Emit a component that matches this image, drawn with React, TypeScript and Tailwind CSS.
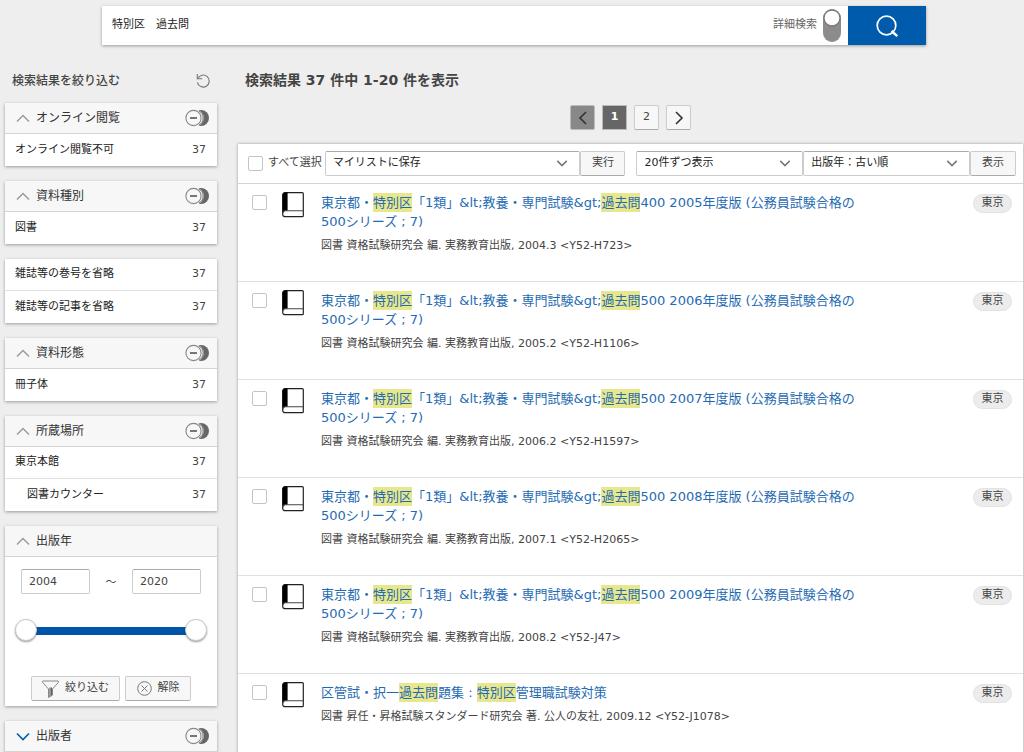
import { Fragment, ReactNode, useState } from "react";

type Facet = { label: string; count: number; nested?: boolean };
type FacetGroup = { title?: string; items: Facet[] };
type Book = { title: string; meta: string };

const KEYWORDS = /(特別区|過去問)/;

const FACET_GROUPS: FacetGroup[] = [
  { title: "オンライン閲覧", items: [{ label: "オンライン閲覧不可", count: 37 }] },
  { title: "資料種別", items: [{ label: "図書", count: 37 }] },
  {
    items: [
      { label: "雑誌等の巻号を省略", count: 37 },
      { label: "雑誌等の記事を省略", count: 37 },
    ],
  },
  { title: "資料形態", items: [{ label: "冊子体", count: 37 }] },
  {
    title: "所蔵場所",
    items: [
      { label: "東京本館", count: 37 },
      { label: "図書カウンター", count: 37, nested: true },
    ],
  },
];

const seriesTitle = (no: number, year: number) =>
  `東京都・特別区「1類」&lt;教養・専門試験&gt;過去問${no} ${year}年度版 (公務員試験合格の500シリーズ ; 7)`;

const BOOKS: Book[] = [
  { title: seriesTitle(400, 2005), meta: "図書 資格試験研究会 編. 実務教育出版, 2004.3 <Y52-H723>" },
  { title: seriesTitle(500, 2006), meta: "図書 資格試験研究会 編. 実務教育出版, 2005.2 <Y52-H1106>" },
  { title: seriesTitle(500, 2007), meta: "図書 資格試験研究会 編. 実務教育出版, 2006.2 <Y52-H1597>" },
  { title: seriesTitle(500, 2008), meta: "図書 資格試験研究会 編. 実務教育出版, 2007.1 <Y52-H2065>" },
  { title: seriesTitle(500, 2009), meta: "図書 資格試験研究会 編. 実務教育出版, 2008.2 <Y52-J47>" },
  {
    title: "区管試・択一過去問題集 : 特別区管理職試験対策",
    meta: "図書 昇任・昇格試験スタンダード研究会 著. 公人の友社, 2009.12 <Y52-J1078>",
  },
];

const CHECKBOX =
  "size-[15px] shrink-0 appearance-none rounded-xs border border-[#c4c4c4] bg-white checked:border-[#005bac] checked:bg-[#005bac]";
const SMALL_BUTTON =
  "flex h-[25px] cursor-pointer items-center justify-center rounded-xs border border-[#ccc] border-b-[#aaa] bg-[#f7f7f7]";
const THUMB =
  "[&::-webkit-slider-thumb]:pointer-events-auto [&::-webkit-slider-thumb]:size-[22px] [&::-webkit-slider-thumb]:appearance-none [&::-webkit-slider-thumb]:rounded-full [&::-webkit-slider-thumb]:border [&::-webkit-slider-thumb]:border-[#ccc] [&::-webkit-slider-thumb]:bg-white [&::-webkit-slider-thumb]:shadow-[0_1px_2px_rgba(0,0,0,0.4)]";
const CARD = "bg-white shadow-[0_1px_3px_rgba(0,0,0,0.35)]";

const Chevron = ({ className, points }: { className: string; points: string }): ReactNode => (
  <svg viewBox="0 0 14 14" fill="none" stroke="currentColor" className={className}>
    <polyline points={points} />
  </svg>
);

const ExcludeIcon = (): ReactNode => (
  <svg width="24" height="18" viewBox="0 0 24 18" fill="none">
    <circle cx="16" cy="9" r="8" fill="#666" />
    <circle cx="10.200" cy="9" r="8.600" fill="#f7f7f7" />
    <path d="M14 2a8 8 0 0 1 0 14" stroke="#777" strokeWidth="1" />
    <circle cx="8.500" cy="9" r="7.600" fill="#f7f7f7" stroke="#888" strokeWidth="1.100" />
    <path d="M5 9h7" stroke="#555" strokeWidth="1.600" />
  </svg>
);

const BookIcon = (): ReactNode => (
  <svg width="22" height="26" viewBox="0 0 22 26" fill="none" className="shrink-0">
    <path d="M3 .7h17.300a1 1 0 0 1 1 1v22a1 1 0 0 1-1 1H3A2.300 2.300 0 0 1 .7 22.400V3A2.300 2.300 0 0 1 3 .7z" fill="#fff" stroke="#222" strokeWidth="1.200" />
    <path d="M3 .5h2.600v18.300H3.200L.5 21V3A2.500 2.500 0 0 1 3 .5z" fill="#000" />
    <path d="M.8 21.500c0-1.700.9-2.700 2.400-2.700h18" stroke="#444" strokeWidth="1.100" />
  </svg>
);

const SearchBar = (): ReactNode => (
  <form
    role="search"
    onSubmit={(e) => e.preventDefault()}
    className={`mt-1.5 mr-[98px] ml-[102px] flex h-[39px] items-stretch ${CARD}`}
  >
    <input
      type="text"
      aria-label="検索キーワード"
      defaultValue="特別区　過去問"
      className="min-w-0 grow px-2.5 text-[#222] outline-none"
    />
    <button type="button" className="flex cursor-pointer items-center gap-1.5 pr-[7px] text-[#666]">
      詳細検索
      <svg width="18" height="33" viewBox="0 0 18 33" fill="none">
        <rect width="18" height="33" rx="9" fill="#8c8c8c" />
        <circle cx="9" cy="9" r="8" fill="#fff" stroke="#777" strokeWidth="1.300" />
      </svg>
    </button>
    <button type="submit" aria-label="検索" className="flex w-[78px] cursor-pointer items-center justify-center bg-[#005bac]">
      <svg width="24" height="24" viewBox="0 0 24 24" fill="none" stroke="#fff">
        <circle cx="11.500" cy="11.500" r="9.300" strokeWidth="1.700" />
        <path d="M16.500 17l5.800 5.200" strokeWidth="2.400" />
      </svg>
    </button>
  </form>
);

const FacetHeader = ({ title, closed, exclude = true }: { title: string; closed?: boolean; exclude?: boolean }): ReactNode => (
  <div className="flex h-[31px] items-center justify-between border-b border-[#d4d4d4] bg-[#f7f7f7] pr-2 pl-[11px]">
    <button type="button" aria-expanded={!closed} className="flex cursor-pointer items-center gap-1.5 text-xs text-[#333]">
      {closed ? (
        <Chevron points="1,4.5 7,10.500 13,4.5" className="size-3.5 text-[#005bac] stroke-[1.6]" />
      ) : (
        <Chevron points="1,10.500 7,4.5 13,10.500" className="size-3.5 text-[#999] stroke-[1.4]" />
      )}
      {title}
    </button>
    {exclude && (
      <button type="button" aria-label={`${title}を除外`} className="cursor-pointer">
        <ExcludeIcon />
      </button>
    )}
  </div>
);

const YearFilter = (): ReactNode => {
  const [from, setFrom] = useState(2004);
  const [to, setTo] = useState(2020);
  const yearInput = "h-[25px] w-[69px] rounded-xs border border-[#ccc] border-t-[#aaa] bg-white px-[7px] text-[#444]";

  return (
    <section className={CARD}>
      <FacetHeader title="出版年" exclude={false} />
      <div className="flex items-center justify-between px-4 pt-3">
        <input
          aria-label="出版年（開始）"
          value={from}
          onChange={(e) => setFrom(Number(e.target.value))}
          className={yearInput}
        />
        <span className="pt-1">～</span>
        <input
          aria-label="出版年（終了）"
          value={to}
          onChange={(e) => setTo(Number(e.target.value))}
          className={yearInput}
        />
      </div>
      <div className="relative mx-2.5 mt-[25px] h-[22px]">
        <div className="absolute inset-x-3 top-2 h-2 bg-[#0055a9]" />
        <input
          type="range"
          aria-label="開始年"
          min={2004}
          max={2020}
          value={from}
          onChange={(e) => setFrom(Math.min(Number(e.target.value), to))}
          className={`pointer-events-none absolute inset-0 h-[22px] w-full appearance-none bg-transparent ${THUMB}`}
        />
        <input
          type="range"
          aria-label="終了年"
          min={2004}
          max={2020}
          value={to}
          onChange={(e) => setTo(Math.max(Number(e.target.value), from))}
          className={`pointer-events-none absolute inset-0 h-[22px] w-full appearance-none bg-transparent ${THUMB}`}
        />
      </div>
      <div className="flex justify-center gap-[5px] pt-[35px] pb-[5px]">
        <button type="button" className={`${SMALL_BUTTON} w-[89px] gap-1.5`}>
          <svg width="17" height="18" viewBox="0 0 17 18" fill="none" stroke="#888">
            <path d="M.7 1h15.600v1.500L10.500 9v6l-4 2.500V9L.7 2.500z" />
            <path d="M8 7.500v9M9.500 7.500v8" stroke="#666" strokeWidth="1.200" />
          </svg>
          絞り込む
        </button>
        <button type="button" className={`${SMALL_BUTTON} w-[66px] gap-1.5`}>
          <svg width="15" height="15" viewBox="0 0 15 15" fill="none" stroke="#777">
            <circle cx="7.500" cy="7.500" r="6.800" />
            <path d="M4.500 4.500l6 6M10.500 4.500l-6 6" />
          </svg>
          解除
        </button>
      </div>
    </section>
  );
};

const Sidebar = (): ReactNode => (
  <aside className="w-[212px] shrink-0">
    <div className="flex h-[33px] items-center justify-between px-[7px]">
      <h2 className="text-xs font-medium text-[#444]">検索結果を絞り込む</h2>
      <button type="button" aria-label="条件をリセット" className="cursor-pointer">
        <svg width="14" height="15" viewBox="0 0 14 15" fill="none" stroke="#777" strokeWidth="1.100">
          <path d="M1.800 5.500a6 6 0 1 1-.4 4" />
          <path d="M1.300 1v4.700h4.900" />
        </svg>
      </button>
    </div>
    <div className="mt-1.5 flex flex-col gap-[15px]">
      {FACET_GROUPS.map((group) => (
        <section key={group.items[0].label} className={CARD}>
          {group.title && <FacetHeader title={group.title} />}
          <ul className="divide-y divide-[#e2e2e2]">
            {group.items.map((item) => (
              <li key={item.label} className="h-8">
                <a
                  href="#"
                  className={`flex h-full items-center justify-between pr-[11px] ${item.nested ? "pl-[22px]" : "pl-2.5"}`}
                >
                  <span className="text-[#222]">{item.label}</span>
                  <span>{item.count}</span>
                </a>
              </li>
            ))}
          </ul>
        </section>
      ))}
      <YearFilter />
      <section className={CARD}>
        <FacetHeader title="出版者" closed />
      </section>
    </div>
  </aside>
);

const Pagination = (): ReactNode => (
  <nav aria-label="ページ" className="flex justify-center gap-[7px]">
    <button type="button" disabled aria-label="前のページ" className="flex size-[25px] items-center justify-center rounded-xs border border-[#bbb] bg-[#888]">
      <Chevron points="10,1 4,7 10,13" className="size-3.5 text-[#333] stroke-[1.6]" />
    </button>
    <button type="button" aria-current="page" className="flex size-[25px] items-center justify-center border border-[#bbb] bg-[#666] font-bold text-white">
      1
    </button>
    <button type="button" className={`${SMALL_BUTTON} w-[25px]`}>
      2
    </button>
    <button type="button" aria-label="次のページ" className={`${SMALL_BUTTON} w-[25px]`}>
      <Chevron points="4,1 10,7 4,13" className="size-3.5 text-[#333] stroke-[1.6]" />
    </button>
  </nav>
);

const SelectBox = ({ label, options, className }: { label: string; options: string[]; className: string }): ReactNode => (
  <div className={`relative min-w-0 ${className}`}>
    <select
      aria-label={label}
      className="h-[25px] w-full appearance-none rounded-xs border border-[#ccc] border-t-[#aaa] bg-white pr-7 pl-[7px] text-[#222]"
    >
      {options.map((option) => (
        <option key={option}>{option}</option>
      ))}
    </select>
    <Chevron points="1.500,4.500 7,10 12.500,4.500" className="pointer-events-none absolute top-[6px] right-3 size-3 text-[#777] stroke-[1.8]" />
  </div>
);

const BookRow = ({ book }: { book: Book }): ReactNode => (
  <li className="flex min-h-[98px] items-start border-b border-[#e0e0e0] pt-2 pr-[11px] pl-3.5">
    <input type="checkbox" aria-label={book.title} className={`${CHECKBOX} mt-[3px]`} />
    <div className="mr-[17px] ml-[15px]">
      <BookIcon />
    </div>
    <div className="min-w-0 grow pt-px pr-[104px]">
      <a href="#" className="block text-[13px] leading-[19px] text-[#1f6bb3] hover:underline">
        {book.title.split(KEYWORDS).map((part, i) =>
          KEYWORDS.test(part) ? (
            <mark key={i} className="bg-[#e9e78c] py-0.5 text-inherit">{part}</mark>
          ) : (
            <Fragment key={i}>{part}</Fragment>
          )
        )}
      </a>
      <p className="mt-[7px] leading-[15px]">{book.meta}</p>
    </div>
    <span className="mt-0.5 flex h-[19px] w-[39px] shrink-0 items-center justify-center rounded-full border border-[#e2e2e2] bg-[#ececec]">
      東京
    </span>
  </li>
);

const Results = (): ReactNode => (
  <main className="min-w-0 grow">
    <h1 className="ml-[7px] flex h-[31px] items-center text-sm font-bold text-[#444]">
      検索結果 37 件中 1-20 件を表示
    </h1>
    <div className="pt-[10px] pb-3.5">
      <Pagination />
    </div>
    <div className="bg-white shadow-[0_0_3px_rgba(0,0,0,0.35)]">
      <div className="flex h-10 items-center border-b border-[#d4d4d4] pr-[7px] pl-2.5">
        <label className="flex shrink-0 items-center gap-[5px] pr-[3px]">
          <input type="checkbox" className={CHECKBOX} />
          すべて選択
        </label>
        <SelectBox label="操作" options={["マイリストに保存"]} className="flex-23" />
        <button type="button" className={`${SMALL_BUTTON} w-[45px] shrink-0`}>
          実行
        </button>
        <SelectBox label="表示件数" options={["20件ずつ表示", "50件ずつ表示"]} className="ml-[11px] flex-15" />
        <SelectBox label="並び順" options={["出版年：古い順", "出版年：新しい順"]} className="flex-15" />
        <button type="button" className={`${SMALL_BUTTON} w-[46px] shrink-0`}>
          表示
        </button>
      </div>
      <ul>
        {BOOKS.map((book) => (
          <BookRow key={book.meta} book={book} />
        ))}
      </ul>
    </div>
  </main>
);

const App = (): ReactNode => (
  <div
    lang="ja"
    className="min-h-screen overflow-hidden bg-[#eee] font-['DejaVu_Sans','Noto_Sans_CJK_JP',sans-serif] text-[11px] text-[#444]"
  >
    <SearchBar />
    <div className="mt-[19px] flex gap-[21px] pr-px pl-[5px]">
      <Sidebar />
      <Results />
    </div>
  </div>
);

export default App;
